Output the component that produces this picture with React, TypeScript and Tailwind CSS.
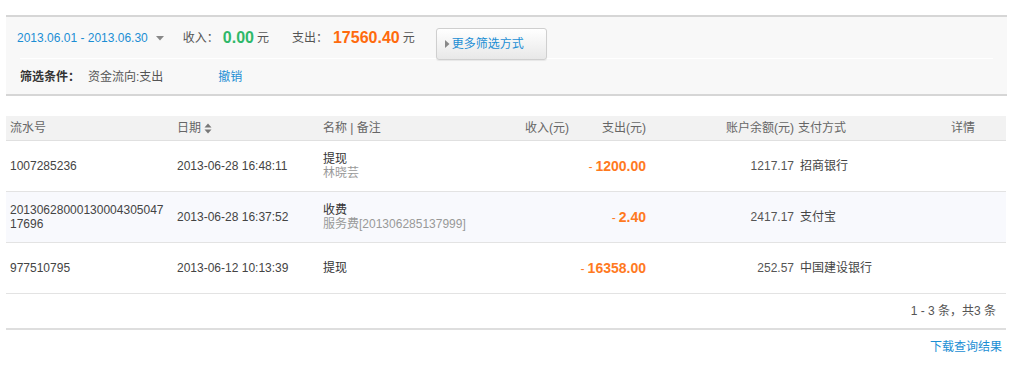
import React from 'react';

interface Row {
  id: string;
  date: string;
  name: string;
  memo?: string;
  income?: string;
  expense: string;
  balance: string;
  method: string;
  shaded?: boolean;
}

const rows: Row[] = [
  {
    id: '1007285236',
    date: '2013-06-28 16:48:11',
    name: '提现',
    memo: '林晓芸',
    expense: '1200.00',
    balance: '1217.17',
    method: '招商银行'
  },
  {
    id: '2013062800013000430504717696',
    date: '2013-06-28 16:37:52',
    name: '收费',
    memo: '服务费[201306285137999]',
    expense: '2.40',
    balance: '2417.17',
    method: '支付宝',
    shaded: true
  },
  {
    id: '977510795',
    date: '2013-06-12 10:13:39',
    name: '提现',
    expense: '16358.00',
    balance: '252.57',
    method: '中国建设银行'
  }
];

// shared column template for header and body rows
const cols = 'grid grid-cols-[167px_146px_181px_73px_77px_146px_134px_76px]';

function SortIcon() {
  return (
    <svg width="8" height="11" viewBox="0 0 8 11" className="ml-[3px]">
      <path d="M4 0.5 L7.5 4.5 L0.5 4.5 Z" fill="#777" />
      <path d="M4 10.5 L7.5 6.5 L0.5 6.5 Z" fill="#777" />
    </svg>
  );
}

export default function App() {
  return (
    <div
      className="w-[1024px] h-[366px] bg-white overflow-hidden text-[12px] text-[#444]"
      style={{ fontFamily: '"Liberation Sans", Arial, "Noto Sans CJK SC", sans-serif' }}
    >
      <div className="ml-[6px] w-[1001px] pt-[15px]">
        {/* Filter panel */}
        <div className="bg-[#f8f8f8] border-t-2 border-b-2 border-[#d6d6d6]">
          <div className="h-[41px] flex items-center pl-[11px]">
            <span className="text-[#1b8ed4]">2013.06.01 - 2013.06.30</span>
            <svg width="8" height="5" viewBox="0 0 8 5" className="ml-[8px] mt-[1px]">
              <path d="M0 0 L8 0 L4 4.5 Z" fill="#888" />
            </svg>
            <span className="ml-[19px] text-[#555]">收入：</span>
            <span className="ml-[4px] text-[16px] font-bold text-[#2fb86a]">0.00</span>
            <span className="ml-[3px] text-[#555]">元</span>
            <span className="ml-[23px] text-[#555]">支出：</span>
            <span className="ml-[5px] text-[16px] font-bold text-[#ff6a0d]">17560.40</span>
            <span className="ml-[3px] text-[#555]">元</span>
            <button className="ml-[21px] w-[111px] h-[32px] flex items-center pl-[8px] rounded-[3px] border border-[#cfcfcf] bg-gradient-to-b from-[#ffffff] to-[#e8e8e8] shadow-[0_1px_1px_rgba(0,0,0,0.07)] relative z-10 translate-y-[6px]">
              <svg width="5" height="8" viewBox="0 0 5 8" className="mr-[2px]">
                <path d="M0 0 L4.5 4 L0 8 Z" fill="#888" />
              </svg>
              <span className="text-[#1b8ed4] text-[12px]">更多筛选方式</span>
            </button>
          </div>
          <div className="mx-[14px] h-px bg-white" />
          <div className="h-[35px] flex items-center pl-[14px]">
            <span className="font-bold text-[#333]">筛选条件：</span>
            <span className="ml-[8px] text-[#555]">资金流向:支出</span>
            <span className="ml-[55px] text-[#1b8ed4]">撤销</span>
          </div>
        </div>

        {/* Table */}
        <div className="mt-[20px] w-[1000px]">
          <div className={`${cols} h-[25px] items-center bg-[#f2f2f2] border-b border-[#e0e0e0] text-[#666]`}>
            <div className="pl-[4px]">流水号</div>
            <div className="pl-[4px] flex items-center">
              日期
              <SortIcon />
            </div>
            <div className="pl-[4px]">名称 | 备注</div>
            <div className="text-right pr-[4px]">收入(元)</div>
            <div className="text-right pr-[4px]">支出(元)</div>
            <div className="text-right pr-[2px]">账户余额(元)</div>
            <div className="pl-[2px]">支付方式</div>
            <div className="pl-[21px]">详情</div>
          </div>

          {rows.map((r) => (
            <div
              key={r.id}
              className={`${cols} h-[51px] items-center border-b border-[#e3e3e3] leading-[14px] ${
                r.shaded ? 'bg-[#f8f9fd]' : 'bg-white'
              }`}
            >
              <div className="pl-[4px] pr-[9px] break-all">{r.id}</div>
              <div className="pl-[4px]">{r.date}</div>
              <div className="pl-[4px]">
                <div className="text-[#333]">{r.name}</div>
                {r.memo && <div className="text-[#999]">{r.memo}</div>}
              </div>
              <div className="text-right pr-[4px]">{r.income}</div>
              <div className="text-right pr-[4px] text-[#ff7a1f]">
                <span className="mr-[3px]">-</span>
                <span className="font-bold text-[14px]">{r.expense}</span>
              </div>
              <div className="text-right pr-[2px] text-[#555]">{r.balance}</div>
              <div className="pl-[4px] text-[#444]">{r.method}</div>
              <div />
            </div>
          ))}

          <div className="h-[36px] flex items-center justify-end pr-[10px] border-b-2 border-[#dedede] text-[#555]">
            1 - 3 条，共3 条
          </div>

          <div className="mt-[8px] leading-[18px] text-right pr-[4px] text-[#1b8ed4]">
            下载查询结果
          </div>
        </div>
      </div>
    </div>
  );
}
